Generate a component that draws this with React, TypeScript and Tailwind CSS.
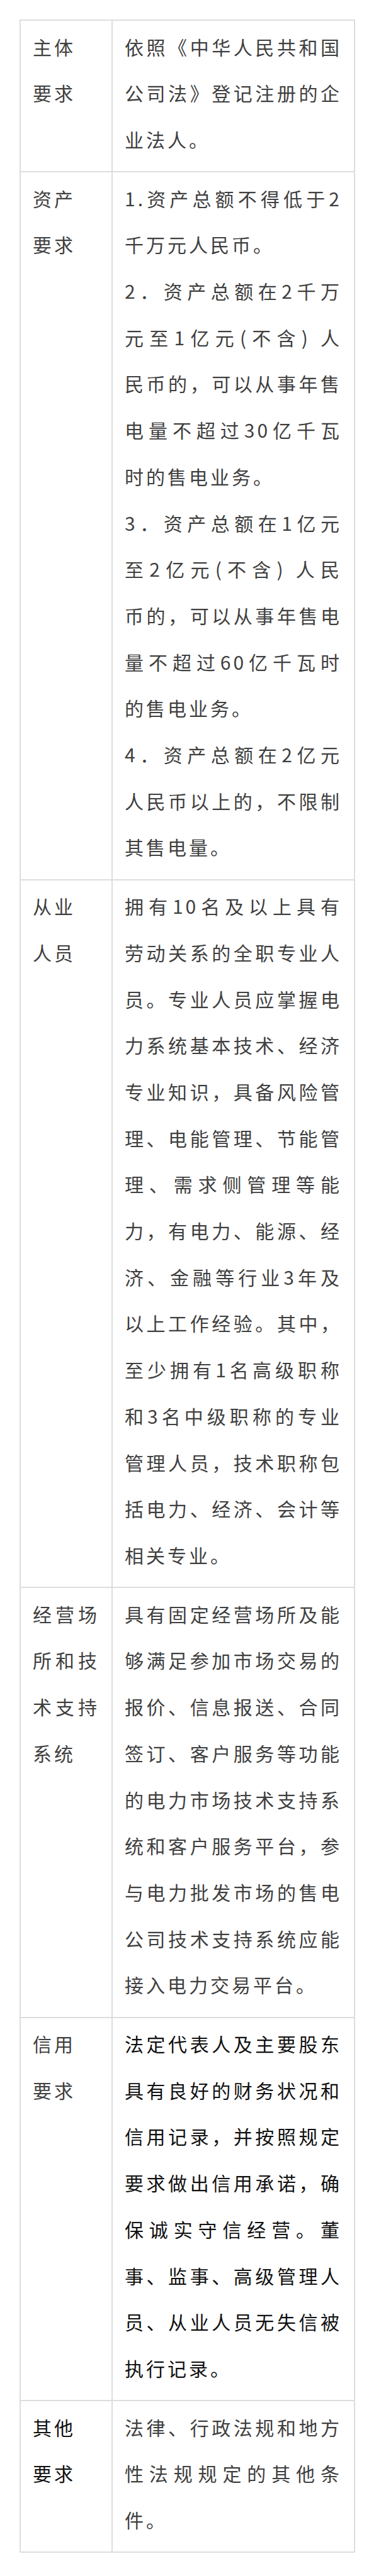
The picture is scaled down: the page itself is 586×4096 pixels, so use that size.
import React from "react";

type Line = [string, boolean]; // [text, justified]

const J = (t: string): Line => [t, true];
const E = (t: string): Line => [t, false];

type Row = {
  left: Line[];
  right: Line[];
  leftDark?: boolean;
  rightDark?: boolean;
};

const rows: Row[] = [
  {
    left: [E("主体"), E("要求")],
    right: [J("依照《中华人民共和国"), J("公司法》登记注册的企"), E("业法人。")],
  },
  {
    left: [E("资产"), E("要求")],
    right: [
      J("1.资产总额不得低于2"),
      E("千万元人民币。"),
      J("2．资产总额在2千万"),
      J("元至1亿元(不含) 人"),
      J("民币的，可以从事年售"),
      J("电量不超过30亿千瓦"),
      E("时的售电业务。"),
      J("3．资产总额在1亿元"),
      J("至2亿元(不含) 人民"),
      J("币的，可以从事年售电"),
      J("量不超过60亿千瓦时"),
      E("的售电业务。"),
      J("4．资产总额在2亿元"),
      J("人民币以上的，不限制"),
      E("其售电量。"),
    ],
  },
  {
    left: [E("从业"), E("人员")],
    right: [
      J("拥有10名及以上具有"),
      J("劳动关系的全职专业人"),
      J("员。专业人员应掌握电"),
      J("力系统基本技术、经济"),
      J("专业知识，具备风险管"),
      J("理、电能管理、节能管"),
      J("理、需求侧管理等能"),
      J("力，有电力、能源、经"),
      J("济、金融等行业3年及"),
      J("以上工作经验。其中，"),
      J("至少拥有1名高级职称"),
      J("和3名中级职称的专业"),
      J("管理人员，技术职称包"),
      J("括电力、经济、会计等"),
      E("相关专业。"),
    ],
  },
  {
    left: [J("经营场"), J("所和技"), J("术支持"), E("系统")],
    right: [
      J("具有固定经营场所及能"),
      J("够满足参加市场交易的"),
      J("报价、信息报送、合同"),
      J("签订、客户服务等功能"),
      J("的电力市场技术支持系"),
      J("统和客户服务平台，参"),
      J("与电力批发市场的售电"),
      J("公司技术支持系统应能"),
      E("接入电力交易平台。"),
    ],
  },
  {
    left: [E("信用"), E("要求")],
    rightDark: true,
    right: [
      J("法定代表人及主要股东"),
      J("具有良好的财务状况和"),
      J("信用记录，并按照规定"),
      J("要求做出信用承诺，确"),
      J("保诚实守信经营。董"),
      J("事、监事、高级管理人"),
      J("员、从业人员无失信被"),
      E("执行记录。"),
    ],
  },
  {
    left: [E("其他"), E("要求")],
    leftDark: true,
    right: [J("法律、行政法规和地方"), J("性法规规定的其他条"), E("件。")],
  },
];

function Lines({ lines }: { lines: Line[] }) {
  return (
    <>
      {lines.map(([t, j], i) => (
        <div
          key={i}
          className={j ? "text-justify [text-align-last:justify]" : "text-left"}
        >
          {t}
        </div>
      ))}
    </>
  );
}

export default function App() {
  return (
    <div
      className="min-h-[4096px] bg-white pt-[31px] pl-[31px]"
      style={{ fontFamily: '"Noto Sans CJK SC", "Noto Sans", sans-serif' }}
    >
      <div className="w-[533px] border-2 border-[#dddddd] text-[30px] leading-[73.7px] tracking-[4px]">
        {rows.map((r, i) => (
          <div
            key={i}
            className={
              i === 0
                ? "flex"
                : "flex border-t-2 border-[#dddddd]"
            }
          >
            <div
              className={
                r.leftDark
                  ? "w-[146px] shrink-0 border-r-2 border-[#dddddd] pl-[19px] pr-[19px] pt-[4.5px] pb-[13.5px] text-[#111111]"
                  : "w-[146px] shrink-0 border-r-2 border-[#dddddd] pl-[19px] pr-[19px] pt-[4.5px] pb-[13.5px] text-[#3f3f3f]"
              }
            >
              <Lines lines={r.left} />
            </div>
            <div
              className={
                r.rightDark
                  ? "flex-1 min-w-0 pl-[19px] pr-[19px] pt-[4.5px] pb-[13.5px] text-[#111111]"
                  : "flex-1 min-w-0 pl-[19px] pr-[19px] pt-[4.5px] pb-[13.5px] text-[#3f3f3f]"
              }
            >
              <Lines lines={r.right} />
            </div>
          </div>
        ))}
      </div>
    </div>
  );
}
